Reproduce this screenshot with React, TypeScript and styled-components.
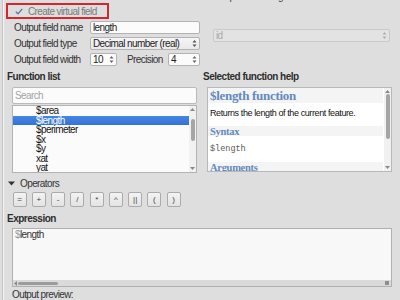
import styled, { createGlobalStyle } from "styled-components";

const GlobalStyle = createGlobalStyle`
  html, body {
    margin: 0;
    padding: 0;
    width: 400px;
    height: 300px;
    overflow: hidden;
    background: #dedede;
  }
  body {
    font-family: "Liberation Sans", Arial, sans-serif;
    font-size: 10px;
    letter-spacing: -0.6px;
    color: #333;
  }
  * {
    box-sizing: border-box;
  }
`;

const Frame = styled.div`
  margin-left: 2px;
  width: 398px;
  height: 300px;
  border-left: 1px solid #c4c4c4;
  box-shadow: inset 1px 0 0 #f4f4f4;
  display: flex;
  flex-direction: column;
`;

const TopGrid = styled.div`
  display: grid;
  grid-template-columns: 195px 185px;
  column-gap: 7px;
  padding-left: 2px;
  margin-top: -9px;
`;

const Column = styled.div`
  display: flex;
  flex-direction: column;
`;

const TitleRow = styled.div<{ $indent: number }>`
  height: 10px;
  display: flex;
  align-items: center;
  gap: 7px;
  padding-left: ${(p) => p.$indent}px;
  color: #444;
`;

const Box = styled.span`
  width: 8px;
  height: 8px;
  border: 1px solid #a4a4a4;
  border-radius: 1px;
  background: #f6f6f6;
`;

const RedBox = styled.div`
  margin: 2px 0 0 1px;
  width: 103px;
  height: 16px;
  border: 2px solid #d3272d;
  display: flex;
  align-items: center;
  gap: 5px;
  padding-left: 7px;
  color: #7a7a7a;
  white-space: nowrap;
`;

const FormGrid = styled.div`
  margin-top: 2px;
  display: grid;
  grid-template-columns: 76px 110px;
  grid-auto-rows: 13px;
  row-gap: 3px;
  padding-left: 9px;
  align-items: center;
`;

const Label = styled.span<{ $gap?: number }>`
  color: #333;
  white-space: nowrap;
  margin-left: ${(p) => p.$gap ?? 0}px;
`;

const Field = styled.div<{ $w?: number; $combo?: boolean; $disabled?: boolean; $push?: boolean }>`
  height: 13px;
  width: ${(p) => (p.$w ? `${p.$w}px` : "100%")};
  margin-left: ${(p) => (p.$push ? "auto" : "0")};
  border: 1px solid ${(p) => (p.$disabled ? "#c9c9c9" : "#b3b3b3")};
  border-radius: 2px;
  background: ${(p) =>
    p.$disabled ? "#e3e3e3" : p.$combo ? "linear-gradient(#f5f5f5, #e9e9e9)" : "#fbfbfb"};
  display: flex;
  align-items: center;
  padding: 0 2px 0 2px;
  color: ${(p) => (p.$disabled ? "#a8a8a8" : "#1e1e1e")};
`;

const FieldText = styled.span`
  flex: 1;
  white-space: nowrap;
  overflow: hidden;
`;

const RightCombo = styled(Field)`
  margin-top: 28px;
  margin-left: 6px;
  width: 177px;
`;

const Inline = styled.div`
  display: flex;
  align-items: center;
`;

const Sections = styled.div`
  display: grid;
  grid-template-columns: 190px 189px;
  column-gap: 6px;
  padding-left: 4px;
  margin-top: 5px;
`;

const SectionLabel = styled.div<{ $indent?: number }>`
  height: 11px;
  line-height: 11px;
  font-weight: bold;
  color: #2e2e2e;
  letter-spacing: -0.5px;
  padding-left: ${(p) => p.$indent ?? 0}px;
`;

const Search = styled.div`
  margin: 5px 0 0 5px;
  width: 185px;
  height: 17px;
  border: 1px solid #b9b9b9;
  border-radius: 2px;
  background: #fbfbfb;
  color: #a3a3a3;
  display: flex;
  align-items: center;
  padding-left: 2px;
`;

const ListBox = styled.div`
  margin: 1px 0 0 5px;
  width: 185px;
  height: 68px;
  border: 1px solid #b3b3b3;
  background: #fbfbfb;
  display: flex;
  overflow: hidden;
`;

const Items = styled.div`
  flex: 1;
  display: flex;
  flex-direction: column;
`;

const Item = styled.div<{ $selected?: boolean }>`
  height: 9.5px;
  line-height: 9.5px;
  flex-shrink: 0;
  padding-left: 23px;
  color: ${(p) => (p.$selected ? "#fff" : "#151515")};
  background: ${(p) => (p.$selected ? "linear-gradient(#4585e4, #3473d6)" : "transparent")};
`;

const Scroll = styled.div`
  width: 7px;
  flex-shrink: 0;
  display: flex;
  flex-direction: column;
  align-items: center;
  padding: 2px 0;
  background: #f1f1f1;
`;

const Track = styled.div`
  flex: 1;
  display: flex;
  flex-direction: column;
  align-items: center;
`;

const Handle = styled.div<{ $top: number; $h: number }>`
  margin-top: ${(p) => p.$top}px;
  height: ${(p) => p.$h}px;
  width: 4px;
  border-radius: 2px;
  background: #a5a5a5;
`;

const HelpBox = styled.div`
  margin: 5px 0 0 4px;
  width: 185px;
  height: 85px;
  border: 1px solid #b8b8b8;
  background: #fff;
  display: flex;
  overflow: hidden;
`;

const HelpContent = styled.div`
  flex: 1;
  display: flex;
  flex-direction: column;
  padding-right: 1px;
`;

const HelpBand = styled.div<{ $h: number; $size: number; $top?: number }>`
  height: ${(p) => p.$h}px;
  margin-top: ${(p) => p.$top ?? 0}px;
  flex-shrink: 0;
  background: #f4f4f4;
  display: flex;
  align-items: center;
  padding-left: 2px;
  font-family: "Liberation Serif", "Times New Roman", serif;
  font-weight: bold;
  font-size: ${(p) => p.$size}px;
  letter-spacing: -0.3px;
  color: #6389bf;
`;

const HelpText = styled.div<{ $h: number; $mono?: boolean }>`
  height: ${(p) => p.$h}px;
  flex-shrink: 0;
  display: flex;
  align-items: center;
  padding-left: 2px;
  white-space: nowrap;
  font-family: ${(p) =>
    p.$mono ? `"Liberation Mono", "Courier New", monospace` : `"Liberation Sans", Arial, sans-serif`};
  font-size: ${(p) => (p.$mono ? "8.5px" : "9px")};
  letter-spacing: ${(p) => (p.$mono ? "0" : "-0.4px")};
  color: ${(p) => (p.$mono ? "#5a5a5a" : "#111")};
`;

const OperatorsRow = styled.div`
  margin-top: 5px;
  height: 10px;
  display: flex;
  align-items: center;
  gap: 5px;
  padding-left: 5px;
  color: #333;
`;

const Buttons = styled.div`
  margin-top: 4px;
  height: 15px;
  display: flex;
  gap: 5.25px;
  padding-left: 9.7px;
`;

const OpButton = styled.div`
  width: 14px;
  height: 15px;
  border: 1px solid #ababab;
  border-radius: 2px;
  background: linear-gradient(#f3f3f3, #e3e3e3);
  display: flex;
  align-items: center;
  justify-content: center;
  font-size: 8px;
  letter-spacing: 0;
  color: #444;
`;

const ExprLabel = styled(SectionLabel)`
  margin-top: 6px;
`;

const ExprBox = styled.div`
  margin: 4px 0 0 9px;
  width: 380px;
  height: 62px;
  border: 1px solid #b0b0b0;
  background: #f8f8f8;
  display: flex;
  flex-direction: column;
`;

const ExprText = styled.div`
  flex: 1;
  padding: 0 2px;
  line-height: 11px;
  color: #333;
`;

const Dollar = styled.span`
  color: #9a9a9a;
`;

const HScroll = styled.div`
  height: 6px;
  background: #dadada;
  display: flex;
  align-items: center;
  padding: 0 2px 0 1px;
  gap: 1px;
`;

const HHandle = styled.div`
  width: 40px;
  height: 3px;
  border-radius: 2px;
  background: #9c9c9c;
`;

const Corner = styled.div`
  margin-left: auto;
  width: 4px;
  height: 4px;
  background: #8e8e8e;
`;

const Preview = styled.div`
  margin-top: 2px;
  padding-left: 9px;
  height: 11px;
  line-height: 11px;
  color: #333;
`;

const Check = () => (
  <svg width="8" height="7" viewBox="0 0 8 7">
    <path d="M0.8 3.6 L3 5.8 L7.3 0.8" fill="none" stroke="#5673a0" strokeWidth="1.3" />
  </svg>
);

const SpinArrows = ({ color = "#555" }: { color?: string }) => (
  <svg width="5" height="9" viewBox="0 0 5 9">
    <path d="M0.5 3.5 L2.5 1 L4.5 3.5 Z M0.5 5.5 L2.5 8 L4.5 5.5 Z" fill={color} />
  </svg>
);

const ArrowUp = () => (
  <svg width="5" height="3" viewBox="0 0 5 3">
    <path d="M0 3 L2.5 0 L5 3 Z" fill="#8a8a8a" />
  </svg>
);

const ArrowDown = () => (
  <svg width="5" height="3" viewBox="0 0 5 3">
    <path d="M0 0 L2.5 3 L5 0 Z" fill="#8a8a8a" />
  </svg>
);

const ArrowLeft = () => (
  <svg width="3" height="5" viewBox="0 0 3 5">
    <path d="M3 0 L0 2.5 L3 5 Z" fill="#8a8a8a" />
  </svg>
);

const Caret = () => (
  <svg width="7" height="5" viewBox="0 0 7 5">
    <path d="M0 0.5 L7 0.5 L3.5 4.5 Z" fill="#333" />
  </svg>
);

const functions = ["$area", "$length", "$perimeter", "$x", "$y", "xat", "yat"];
const operators = ["=", "+", "-", "/", "*", "^", "||", "(", ")"];

function ScrollBar({ top, h }: { top: number; h: number }) {
  return (
    <Scroll>
      <ArrowUp />
      <Track>
        <Handle $top={top} $h={h} />
      </Track>
      <ArrowDown />
    </Scroll>
  );
}

function App() {
  return (
    <>
      <GlobalStyle />
      <Frame>
        <TopGrid>
          <Column>
            <TitleRow $indent={6}>
              <Box />
              <span>Create a new field</span>
            </TitleRow>
            <RedBox>
              <Check />
              <span>Create virtual field</span>
            </RedBox>
            <FormGrid>
              <Label>Output field name</Label>
              <Field>
                <FieldText>length</FieldText>
              </Field>
              <Label>Output field type</Label>
              <Field $combo>
                <FieldText>Decimal number (real)</FieldText>
                <SpinArrows />
              </Field>
              <Label>Output field width</Label>
              <Inline>
                <Field $w={27}>
                  <FieldText>10</FieldText>
                  <SpinArrows color="#666" />
                </Field>
                <Label $gap={10}>Precision</Label>
                <Field $w={32} $push>
                  <FieldText>4</FieldText>
                  <SpinArrows color="#666" />
                </Field>
              </Inline>
            </FormGrid>
          </Column>
          <Column>
            <TitleRow $indent={1}>
              <Box />
              <span>Update existing field</span>
            </TitleRow>
            <RightCombo $disabled>
              <FieldText>id</FieldText>
              <SpinArrows color="#b0b0b0" />
            </RightCombo>
          </Column>
        </TopGrid>

        <Sections>
          <Column>
            <SectionLabel>Function list</SectionLabel>
            <Search>Search</Search>
            <ListBox>
              <Items>
                {functions.map((f) => (
                  <Item key={f} $selected={f === "$length"}>
                    {f}
                  </Item>
                ))}
              </Items>
              <ScrollBar top={8} h={22} />
            </ListBox>
          </Column>
          <Column>
            <SectionLabel>Selected function help</SectionLabel>
            <HelpBox>
              <HelpContent>
                <HelpBand $h={15} $size={13}>
                  $length function
                </HelpBand>
                <HelpText $h={20}>Returns the length of the current feature.</HelpText>
                <HelpBand $h={10} $size={10.5} $top={3}>
                  Syntax
                </HelpBand>
                <HelpText $h={26} $mono>
                  $length
                </HelpText>
                <HelpBand $h={11} $size={10.5}>
                  Arguments
                </HelpBand>
              </HelpContent>
              <ScrollBar top={1} h={45} />
            </HelpBox>
          </Column>
        </Sections>

        <OperatorsRow>
          <Caret />
          <span>Operators</span>
        </OperatorsRow>
        <Buttons>
          {operators.map((o) => (
            <OpButton key={o}>{o}</OpButton>
          ))}
        </Buttons>

        <ExprLabel $indent={4}>Expression</ExprLabel>
        <ExprBox>
          <ExprText>
            <Dollar>$</Dollar>length
          </ExprText>
          <HScroll>
            <ArrowLeft />
            <HHandle />
            <Corner />
          </HScroll>
        </ExprBox>
        <Preview>Output preview:</Preview>
      </Frame>
    </>
  );
}

export default App;
